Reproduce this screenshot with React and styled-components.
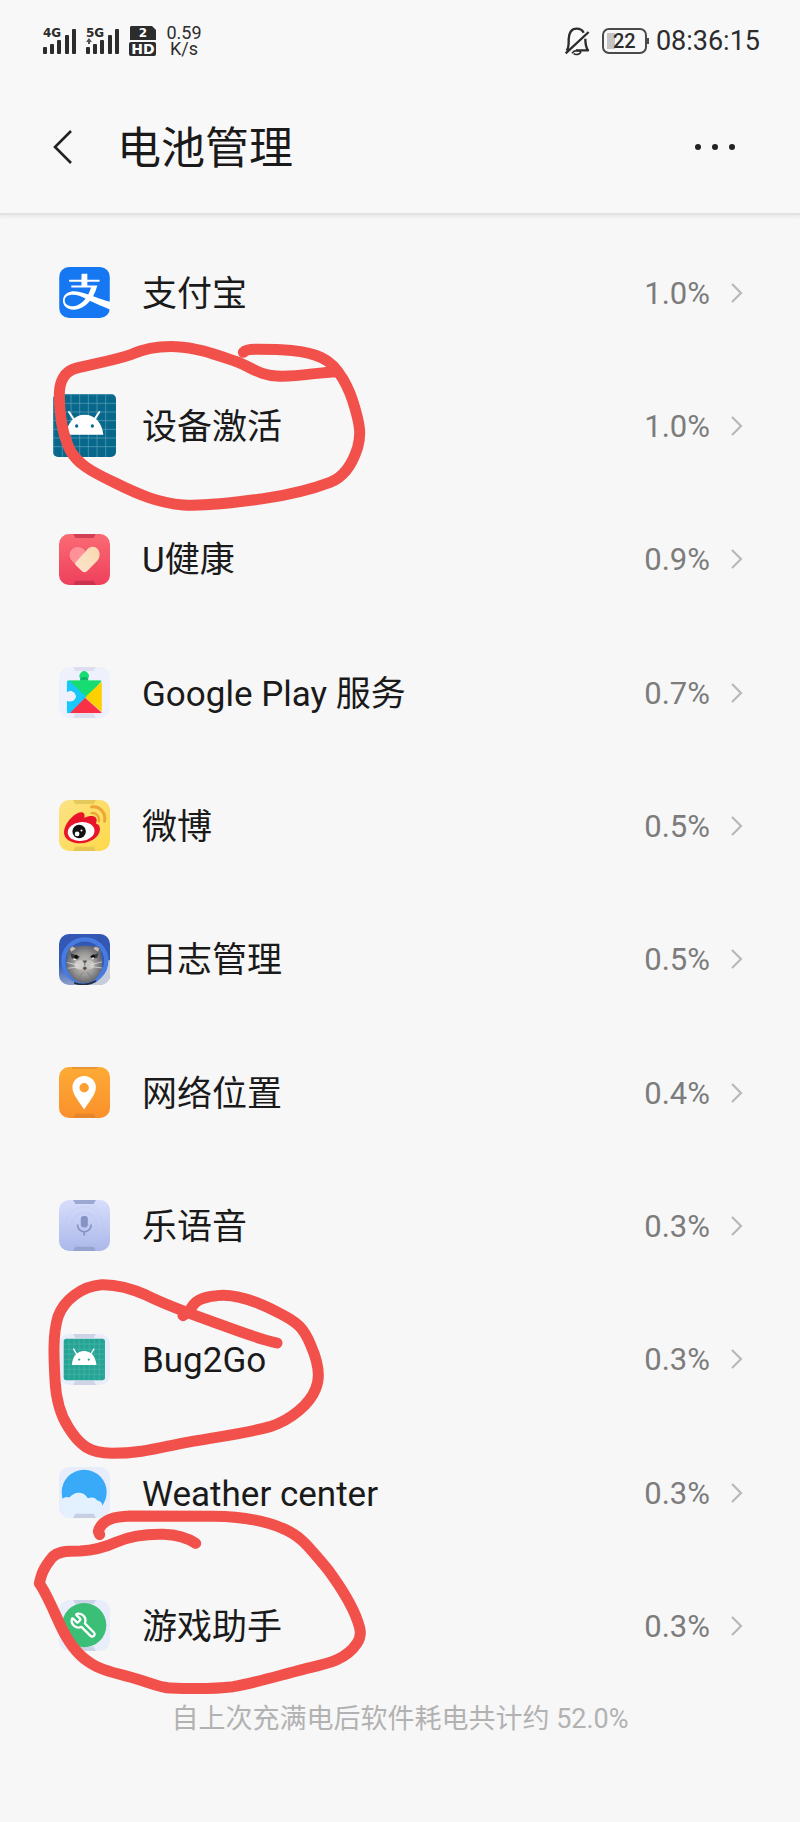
import React from "react";
import styled, { createGlobalStyle } from "styled-components";
import { SiAlipay } from "react-icons/si";
import { Wrench } from "lucide-react";

const GlobalStyle = createGlobalStyle`
  * { box-sizing: border-box; }
  body {
    margin: 0;
    background: #f7f7f7;
    color: #1a1a1a;
    font-family: Roboto, "Noto Sans CJK SC", sans-serif;
  }
`;

const Page = styled.div`
  min-height: 100vh;
  overflow-x: hidden;
`;

const Header = styled.header`
  background: #f8f8f8;
  border-bottom: 2px solid #e2e2e2;
  box-shadow: 0 2px 4px #00000010;
`;

const StatusBar = styled.div`
  display: flex;
  justify-content: space-between;
  align-items: center;
  height: 82px;
  padding: 0 40px 0 43px;
  color: #2c2c2c;
`;

const StatusGroup = styled.div`
  display: flex;
  align-items: center;
  gap: ${(p) => p.$gap}px;
`;

const StatusGlyph = styled.svg`
  display: block;
  flex: none;
  font-family: "DejaVu Sans", sans-serif;
  font-weight: 700;
`;

const Speed = styled.div`
  width: 36px;
  font-size: 18px;
  line-height: 16px;
  text-align: center;
`;

const Battery = styled.div`
  position: relative;
  display: flex;
  align-items: center;
  justify-content: center;
  width: 45px;
  height: 26px;
  margin: 0 5px 0 8px;
  border: 2px solid #4a4a4a;
  border-radius: 7px;
  background: linear-gradient(#c4c4c4, #c4c4c4) 3px 3px / 8px 16px no-repeat;
  font-size: 20px;
  font-weight: 500;
  line-height: 20px;

  &::after {
    content: "";
    position: absolute;
    right: -4px;
    top: 8px;
    width: 2px;
    height: 6px;
    background: #4a4a4a;
  }
`;

const Clock = styled.time`
  font-size: 27px;
  line-height: 32px;
`;

const TitleBar = styled.div`
  display: flex;
  align-items: center;
  height: 131px;
  padding: 0 53px 2px 45px;
`;

const IconButton = styled.button`
  display: grid;
  place-items: center;
  width: ${(p) => p.$width}px;
  height: 48px;
  padding: 0;
  border: 0;
  background: none;
  color: #222;
`;

const Title = styled.h1`
  flex: 1;
  margin: 0 0 0 38px;
  padding-top: 4px;
  font-size: 44px;
  font-weight: 400;
  line-height: 56px;
`;

const List = styled.ul`
  margin: 0;
  padding: 11px 0 0;
  list-style: none;
`;

const Item = styled.li`
  position: relative;
  height: 133px;

  &:nth-child(3n) {
    height: 134px;
  }
`;

const RowLink = styled.a`
  display: flex;
  align-items: center;
  height: 100%;
  padding: 0 57px 0 53px;
  color: inherit;
  text-decoration: none;
`;

const IconSlot = styled.span`
  display: grid;
  place-items: center;
  width: 63px;
  margin-right: 26px;
`;

const AppIcon = styled.svg`
  display: block;
  width: ${(p) => p.$size || 51}px;
  height: ${(p) => p.$size || 51}px;
  border-radius: ${(p) => p.$radius || 10}px;
  overflow: hidden;
`;

const Name = styled.span`
  flex: 1;
  padding-top: 4px;
  font-size: 35px;
  line-height: 48px;
`;

const Percent = styled.span`
  margin-right: 21px;
  padding-top: 2px;
  color: #7c7c7c;
  font-size: 31px;
  line-height: 40px;
`;

const Marker = styled.svg`
  position: absolute;
  z-index: 1;
  left: 30px;
  top: ${(p) => p.$top}px;
  fill: none;
  stroke: #f2514b;
  stroke-linecap: round;
  stroke-linejoin: round;
  pointer-events: none;
`;

const Summary = styled.p`
  margin: 0;
  padding: 9px 0 80px;
  color: #b2b2b2;
  font-size: 27px;
  line-height: 36px;
  text-align: center;
`;

const Signal = ({ label, uplink }) => (
  <StatusGlyph width="34" height="30" viewBox="0 0 34 30" fill="currentColor">
    <text x="0" y="11" fontSize="12">{label}</text>
    {uplink && <path d="M0 16l3-4 3 4H4v2H2v-2z" opacity="0.8" />}
    <rect x="0" y="21" width="4" height="7" rx="1" />
    <rect x="7" y="18" width="4" height="10" rx="1" />
    <rect x="14" y="14" width="4" height="14" rx="1" />
    <rect x="22" y="9" width="4" height="19" rx="1" />
    <rect x="29" y="3" width="4" height="25" rx="1" />
  </StatusGlyph>
);

const HdBadge = () => (
  <StatusGlyph width="28" height="32" viewBox="0 0 28 32">
    <path d="M2 1h21l4 4v10H1V2z" fill="#2c2c2c" />
    <rect x="0" y="17" width="27" height="14" rx="2" fill="#2c2c2c" />
    <text x="14" y="12" fontSize="12" fill="#fff" textAnchor="middle">2</text>
    <text x="14" y="29" fontSize="14" fill="#fff" textAnchor="middle">HD</text>
  </StatusGlyph>
);

const BellOff = () => (
  <svg width="26" height="30" viewBox="0 0 78 90" fill="none" stroke="#2c2c2c" strokeWidth="7" strokeLinejoin="round">
    <path d="M8 74c7-9 6-20 6-34C14 20 23 8 38 8c9 0 17 4 21 12M5 82L74 18M64 38c0 17 2 26 8 35H36" />
    <path d="M24 82c4-6 10-9 16-8 6 0 10 2 10 5-2 6-15 9-21 4" strokeWidth="5" />
  </svg>
);

const Ears = ({ fill, opacity = 1 }) => (
  <g fill={fill} opacity={opacity}>
    <path d="M42 0h68l-7 12H49z" />
    <path d="M42 152h68l-7-13H49z" />
  </g>
);

const AlipayIcon = () => (
  <AppIcon viewBox="0 0 152 152">
    <rect width="152" height="152" fill="#fff" />
    <SiAlipay size={152} color="#1677f3" />
  </AppIcon>
);

const gridLines = Array.from({ length: 7 }, (_, i) => 2 + i * 26);

const AndroidHead = () => (
  <>
    <path d="M40 122c2-36 24-60 55-60s52 24 56 60z" fill="#fff" />
    <path d="M48 54l13 20M139 54l-13 20" stroke="#fff" strokeWidth="6" strokeLinecap="round" />
  </>
);

const ActivationIcon = () => (
  <AppIcon viewBox="0 0 189 189" $size={63} $radius={5}>
    <rect width="189" height="189" fill="#08688c" />
    <g stroke="#5fa3ba" strokeWidth="2">
      {gridLines.map((p) => (
        <path key={p} d={`M${p} 0V189M0 ${p}H189`} />
      ))}
    </g>
    <AndroidHead />
    <circle cx="71" cy="96" r="5" fill="#08688c" />
    <circle cx="118" cy="96" r="5" fill="#08688c" />
  </AppIcon>
);

const BugIcon = () => (
  <AppIcon viewBox="0 0 152 152">
    <rect width="152" height="152" fill="#e8edf9" />
    <Ears fill="#ced3e6" />
    <rect x="14" y="14" width="123" height="124" rx="8" fill="#25a394" />
    <g stroke="#58bcae" strokeWidth="1.5">
      {Array.from({ length: 7 }, (_, i) => 30 + i * 15).map((p) => (
        <path key={p} d={`M${p} 15V137M15 ${p}H136`} />
      ))}
    </g>
    <g transform="translate(12 8) scale(.66 .69)">
      <AndroidHead />
      <circle cx="73" cy="99" r="5" fill="#25a394" />
      <circle cx="116" cy="99" r="5" fill="#25a394" />
    </g>
  </AppIcon>
);

const HealthIcon = () => (
  <AppIcon viewBox="0 0 152 152">
    <defs>
      <linearGradient id="healthBg" x2="0" y2="1">
        <stop stopColor="#fb6b74" />
        <stop offset="1" stopColor="#ee405c" />
      </linearGradient>
      <linearGradient id="pill" x1="1" y1="0" x2="0" y2="1">
        <stop stopColor="#f8dab0" />
        <stop offset="1" stopColor="#fde3cc" />
      </linearGradient>
    </defs>
    <rect width="152" height="152" fill="url(#healthBg)" />
    <Ears fill="#b92c48" opacity={0.65} />
    <path d="M78 50C66 37 50 36 40 45s-11 24-2 34l16 18z" fill="#ff9299" />
    <path d="M50 84L84 46C92 36 107 36 115 45s8 24 0 34L84 110Q76 118 68 110L51 94Q46 89 50 84z" fill="url(#pill)" />
  </AppIcon>
);

const PlayIcon = () => (
  <AppIcon viewBox="0 0 152 152">
    <rect width="152" height="152" fill="#eef1fb" />
    <Ears fill="#dcdfee" />
    <clipPath id="piece">
      <path d="M28 40h35v-6a14 14 0 1 1 24 0v6h36q5 0 5 5v88q0 5-5 5H28q-5 0-5-5v-32c8 5 26 3 28-13-2-17-20-20-28-13V45q0-5 5-5z" />
    </clipPath>
    <g clipPath="url(#piece)">
      <path d="M23 40l53 50-53 50z" fill="#19c8fb" />
      <path d="M24 40L50 0h55l23 40-40 48-12 2z" fill="#17dc72" />
      <path d="M128 44v90L76 90z" fill="#ffd000" />
      <path d="M24 140L76 90l52 46v6z" fill="#fa3146" />
      <path d="M22 40h8l52 48-50 50H22z" fill="#19c8fb" />
      <path d="M30 40h98L80 88z" fill="#17dc72" />
      <path d="M62 38h26c-3-6-8-8-13-8s-10 2-13 8z" fill="#0fab60" />
    </g>
  </AppIcon>
);

const WeiboIcon = () => (
  <AppIcon viewBox="0 0 152 152">
    <defs>
      <linearGradient id="weiboBg" x1="0" y1="0" x2="1" y2="1">
        <stop stopColor="#fbe384" />
        <stop offset="1" stopColor="#ffd84a" />
      </linearGradient>
    </defs>
    <rect width="152" height="152" fill="url(#weiboBg)" />
    <Ears fill="#d6b94c" opacity={0.6} />
    <path d="M97 21c23-4 43 16 39 42" fill="none" stroke="#eba735" strokeWidth="9" strokeLinecap="round" />
    <path d="M97 39c13-2 24 9 22 24" fill="none" stroke="#eba735" strokeWidth="7" strokeLinecap="round" />
    <path d="M15 93c2-22 25-48 43-55 15-5 21 3 17 15 14-6 29-8 35 0 4 6 2 12 0 17 8 2 13 8 12 19-2 22-28 40-58 40-29 0-51-13-49-36z" fill="#e8152a" />
    <ellipse cx="66" cy="94" rx="40" ry="28" transform="rotate(-7 66 94)" fill="#fff" />
    <circle cx="60" cy="94" r="20" fill="#111" />
    <circle cx="54" cy="101" r="7" fill="#fff" />
    <circle cx="67" cy="91" r="3" fill="#fff" />
  </AppIcon>
);

const CatIcon = () => (
  <AppIcon viewBox="0 0 152 152">
    <defs>
      <linearGradient id="catBg" x2="0" y2="1">
        <stop stopColor="#3357b2" />
        <stop offset=".6" stopColor="#315ab9" />
        <stop offset="1" stopColor="#8da0c8" />
      </linearGradient>
      <radialGradient id="fur">
        <stop stopColor="#c8c6c3" />
        <stop offset=".6" stopColor="#9b9a98" />
        <stop offset="1" stopColor="#666870" />
      </radialGradient>
    </defs>
    <rect width="152" height="152" fill="url(#catBg)" />
    <path d="M152 78v74H92c32-10 45-35 44-74z" fill="#c8cdda" />
    <circle cx="77" cy="80" r="64" fill="none" stroke="#477be0" strokeWidth="13" />
    <path d="M22 78l5-30Q34 34 44 38q32-6 66 0 10-4 14 10l5 30q2 28-12 46-14 22-40 22-28 0-42-22-16-18-13-46z" fill="url(#fur)" />
    <path d="M32 45l8-8 10 7-14 9zM120 44l-10-7-8 7 14 9z" fill="#c5bcb4" />
    <path d="M34 57l28 10-6 8-18-3zM117 57L92 66l5 8 17-3z" fill="#3a3b3e" />
    <circle cx="51" cy="67" r="5" fill="#0b0b0b" />
    <circle cx="102" cy="66" r="5" fill="#0b0b0b" />
    <path d="M43 74l7 3M97 74l7-3" stroke="#eee" strokeWidth="4" />
    <ellipse cx="63" cy="92" rx="17" ry="14" fill="#cfcdca" />
    <ellipse cx="89" cy="92" rx="17" ry="14" fill="#c6c4c1" />
    <path d="M71 80h12l-6 8zM77 88v12" fill="#5b4745" stroke="#666" strokeWidth="2" />
    <path d="M70 101q7-6 14 0l-7 7z" fill="#5a4440" />
    <path d="M60 93l-37-8M60 98l-34 4M92 92l37-9M92 97l36 4" stroke="#e7e7e7" strokeWidth="2" />
    <path d="M72 114l-14 20M84 114l16 20" stroke="#777" strokeWidth="2" />
    <path d="M45 145q31 13 65-5" fill="none" stroke="#232b42" strokeWidth="5" />
  </AppIcon>
);

const LocationIcon = () => (
  <AppIcon viewBox="0 0 152 152">
    <defs>
      <linearGradient id="pinBg" x2="0" y2="1">
        <stop stopColor="#fdab35" />
        <stop offset="1" stopColor="#fa902b" />
      </linearGradient>
    </defs>
    <rect width="152" height="152" fill="url(#pinBg)" />
    <path d="M42 152h68l-7-13H49z" fill="#d67b2d" opacity=".55" />
    <path d="M38 0h76l-3 5H41z" fill="#d67b2d" opacity=".55" />
    <path fillRule="evenodd" d="M75 27c20 0 35 15 35 34 0 22-25 48-35 66-10-18-35-44-35-66 0-19 15-34 35-34zm0 21a14 14 0 1 0 0 28 14 14 0 0 0 0-28z" fill="#fff" />
  </AppIcon>
);

const VoiceIcon = () => (
  <AppIcon viewBox="0 0 152 152">
    <defs>
      <linearGradient id="voiceBg" x2="0" y2="1">
        <stop stopColor="#d7ddfb" />
        <stop offset="1" stopColor="#abb8ea" />
      </linearGradient>
    </defs>
    <rect width="152" height="152" fill="url(#voiceBg)" />
    <Ears fill="#929ecb" opacity={0.85} />
    <g fill="none" stroke="#bcc6ee" strokeWidth="2">
      <circle cx="75" cy="76" r="38" />
      <circle cx="75" cy="76" r="55" opacity=".5" />
    </g>
    <rect x="65" y="48" width="21" height="34" rx="9" fill="#8793c3" />
    <path d="M55 73c0 29 41 29 41 0M75 95v11" fill="none" stroke="#8793c3" strokeWidth="5" />
  </AppIcon>
);

const WeatherIcon = () => (
  <AppIcon viewBox="0 0 152 152">
    <rect width="152" height="152" fill="#e8edfb" />
    <circle cx="75" cy="75" r="67" fill="#38aaf8" />
    <path d="M6 100c9-11 17-13 25-9 16-19 42-19 55 2 12-5 23-2 28 7 9 0 14 7 15 13l-4 39H16z" fill="#e3f0fd" />
    <path d="M42 152h68l-7-13H49z" fill="#c8cfe4" />
  </AppIcon>
);

const HelperIcon = () => (
  <AppIcon viewBox="0 0 152 152">
    <rect width="152" height="152" fill="#e8edf9" />
    <Ears fill="#ccd3e6" />
    <circle cx="75" cy="75" r="66" fill="#3bbf77" />
    <g transform="translate(113 34) scale(-1 1)">
      <Wrench x="0" y="0" width="82" height="82" color="#fff" strokeWidth={2} />
    </g>
  </AppIcon>
);

const markers = {
  activation: {
    top: -109, height: 270,
    d: "M640 307C650 297 667 298 680 298C750 298 825 299 875 323C927 346 960 420 975 475C991 530 993 556 983 592C968 640 940 682 900 697C845 718 780 734 700 746C600 760 520 769 460 765C390 760 330 736 250 696C180 663 142 640 120 600C98 555 88 500 88 430C89 394 103 364 137 355C190 341 250 332 305 313C357 290 400 288 440 290C500 292 560 315 620 335C670 355 690 376 740 378C800 382 860 367 920 365",
  },
  bug: {
    top: -22, height: 250,
    d: "M741 219C675 204 610 178 545 154C480 131 415 108 350 76C300 53 260 43 215 44C155 48 101 91 84 140C67 195 72 270 75 330C78 388 88 430 115 472C150 529 180 548 245 550C330 550 380 535 455 520C530 505 640 492 720 470C785 450 840 400 857 356C873 320 862 270 842 225C822 175 805 158 745 128C680 94 610 70 560 77C515 81 492 92 478 125L459 137",
  },
  helper: {
    top: -109, height: 300,
    d: "M497 280C470 263 430 254 400 253C350 252 300 259 260 276C225 292 190 301 150 303C108 303 82 304 65 324C38 357 34 375 28 400C48 428 63 465 86 515C108 565 140 612 175 635C207 659 255 669 300 681C350 694 390 714 420 714C500 717 560 716 610 710C680 698 755 674 820 658C880 643 945 635 981 580C997 555 991 536 982 511C962 455 926 403 893 358C843 300 815 256 755 234C700 210 630 200 550 199C450 198 370 199 300 198C255 200 215 207 205 244L209 254",
  },
};

const apps = [
  { name: "支付宝", percent: "1.0%", Icon: AlipayIcon },
  { name: "设备激活", percent: "1.0%", Icon: ActivationIcon, marker: markers.activation },
  { name: "U健康", percent: "0.9%", Icon: HealthIcon },
  { name: "Google Play 服务", percent: "0.7%", Icon: PlayIcon },
  { name: "微博", percent: "0.5%", Icon: WeiboIcon },
  { name: "日志管理", percent: "0.5%", Icon: CatIcon },
  { name: "网络位置", percent: "0.4%", Icon: LocationIcon },
  { name: "乐语音", percent: "0.3%", Icon: VoiceIcon },
  { name: "Bug2Go", percent: "0.3%", Icon: BugIcon, marker: markers.bug },
  { name: "Weather center", percent: "0.3%", Icon: WeatherIcon },
  { name: "游戏助手", percent: "0.3%", Icon: HelperIcon, marker: markers.helper },
];

const AppRow = ({ name, percent, Icon, marker }) => (
  <Item>
    <RowLink href="#">
      <IconSlot><Icon /></IconSlot>
      <Name>{name}</Name>
      <Percent>{percent}</Percent>
      <svg width="12" height="22" viewBox="0 0 12 22" fill="none" stroke="#b8b8b8" strokeWidth="2.2">
        <path d="M1 2l9 9-9 9" />
      </svg>
    </RowLink>
    {marker && (
      <Marker $top={marker.top} width="360" height={marker.height} viewBox={`0 0 1080 ${marker.height * 3}`} strokeWidth="33" aria-hidden="true">
        <path d={marker.d} />
      </Marker>
    )}
  </Item>
);

export default function App() {
  return (
    <Page lang="zh-CN">
      <GlobalStyle />
      <Header>
        <StatusBar>
          <StatusGroup $gap={9}>
            <Signal label="4G" />
            <Signal label="5G" uplink />
            <HdBadge />
            <Speed>0.59 K/s</Speed>
          </StatusGroup>
          <StatusGroup $gap={4}>
            <BellOff />
            <Battery>22</Battery>
            <Clock>08:36:15</Clock>
          </StatusGroup>
        </StatusBar>
        <TitleBar>
          <IconButton type="button" $width={34} aria-label="返回">
            <svg width="20" height="36" viewBox="0 0 20 36" fill="none" stroke="currentColor" strokeWidth="2.6">
              <path d="M19 2L3 18l16 16" />
            </svg>
          </IconButton>
          <Title>电池管理</Title>
          <IconButton type="button" $width={64} aria-label="更多">
            <svg width="42" height="8" viewBox="0 0 42 8" fill="currentColor">
              <circle cx="4" cy="4" r="3" />
              <circle cx="21" cy="4" r="3" />
              <circle cx="38" cy="4" r="3" />
            </svg>
          </IconButton>
        </TitleBar>
      </Header>
      <main>
        <List>
          {apps.map((app) => (
            <AppRow key={app.name} {...app} />
          ))}
        </List>
        <Summary>自上次充满电后软件耗电共计约 52.0%</Summary>
      </main>
    </Page>
  );
}
